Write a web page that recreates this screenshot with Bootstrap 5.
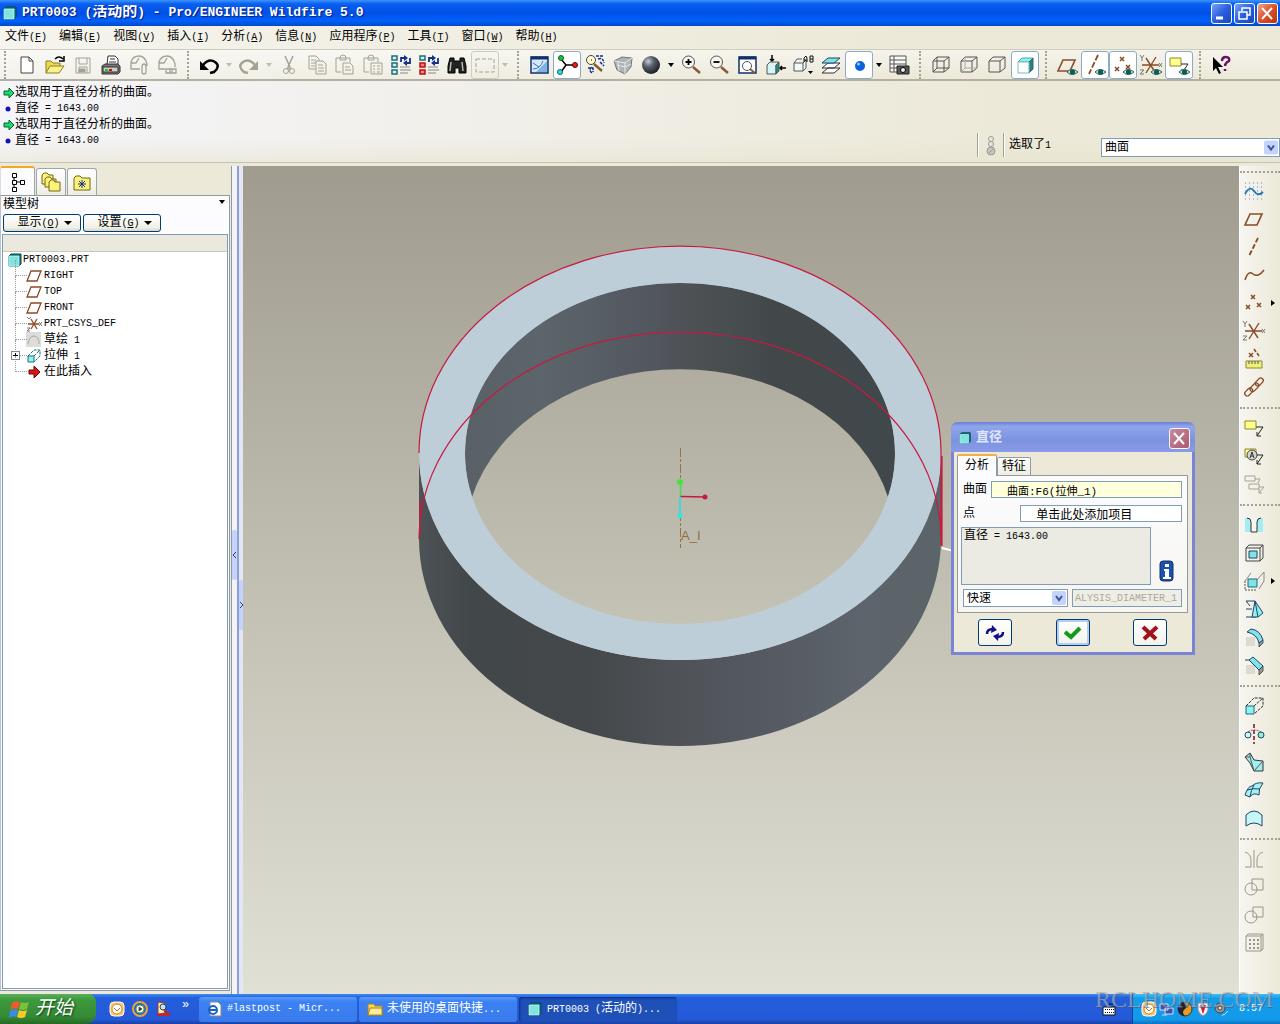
<!DOCTYPE html>
<html lang="zh-CN">
<head>
<meta charset="utf-8">
<meta name="viewport" content="width=device-width, initial-scale=1">
<title>PRT0003 (活动的) - Pro/ENGINEER Wildfire 5.0</title>
<link href="https://cdn.jsdelivr.net/npm/bootstrap@5.3.0/dist/css/bootstrap.min.css" rel="stylesheet">
<style>
body{font-family:"Liberation Mono","Noto Sans CJK SC",monospace;font-size:12px;line-height:16px;color:#000;background:#ece9d8;overflow:hidden}
button,input,select,textarea{font-family:inherit;font-size:12px;line-height:16px;color:#000}
button{border:0;background:none;padding:0}
svg{display:block;flex:none}
.en{font-size:10px}
.ic{width:24px;height:24px;fill:none;stroke:#555;stroke-width:1}
.ic-s{width:16px;height:16px;fill:none;stroke:#555}
/* title bar */
.titlebar{height:26px;background:linear-gradient(#3d95ff,#0a5ff0 15%,#0050e6 50%,#0162fc 80%,#0148c8);color:#fff;font-weight:700;font-size:15px;text-shadow:1px 1px 1px #0a1883;padding:0 2px}
.titlebar .en{font-size:13px}
.winbtn{width:21px;height:21px;border:1px solid #fff;border-radius:3px;background:linear-gradient(135deg,#7aa2f5,#2a5fe0 50%,#1b45bd)}
.winbtn.shut{background:linear-gradient(135deg,#f0a58c,#dc5028 50%,#b8360e)}
.winbtn svg{width:19px;height:19px;fill:none;stroke:#fff;stroke-width:2}
.menubar{height:23px;background:linear-gradient(90deg,#f5f4ee,#ece9d8 70%);padding-left:5px;gap:12px}
.menubar a{color:#000;text-decoration:none;white-space:nowrap}
/* tool bars */
.toolstrip{height:32px;border-top:1px solid #cfccbd;border-bottom:2px solid #b3b0a2;background:linear-gradient(#ffffff80,#ffffff00),linear-gradient(90deg,#f3f2ec,#ece9d8 70%)}
.tb{width:28px;height:28px;display:flex;align-items:center;justify-content:center;flex:none;border:1px solid transparent;border-radius:3px}
.tb.on{background:#fff;border-color:#8eabc6}
.tb.idle{border-color:#cfccbd}
.caret{width:12px;display:flex;justify-content:center;align-items:center;flex:none}
.caret::before{content:"";border:3px solid transparent;border-top:4px solid #000;border-bottom:0}
.caret.dim::before{border-top-color:#c2bfb0}
.grip{width:14px;height:28px;flex:none;display:flex;justify-content:center}
.grip::before{content:"";border-left:2px dotted #a5a294}
.grip.lead-in{width:13px;padding-right:3px}
.msgs{height:82px;background:linear-gradient(#ffffff00 70%,#e6e2cd80),linear-gradient(90deg,#f5f5f9,#ece9d8 80%);border-bottom:1px solid #c5c2b3}
.msgs ul{padding:4px 0 0 3px}
.msgs li{height:16px;display:flex;align-items:center;white-space:pre}
.status{margin-bottom:5px}
.vline{border-left:1px solid #a5a294;height:24px;width:2px;border-right:1px solid #fff}
.pick{position:relative}
.pick select{appearance:none;width:100%;height:100%;border:1px solid #7f9db9;border-radius:0;background:#fff;padding:2px 3px 0;line-height:14px;display:block}
.pick svg{position:absolute;right:2px;top:2px;pointer-events:none}
/* left panel */
.sidepane{width:230px;flex:none}
.pane-tabs{gap:1px}
.pane-tabs button{width:30px;height:27px;border:1px solid #9aa6b2;border-bottom:0;border-radius:3px 3px 0 0;background:linear-gradient(#fff,#efede2);display:flex;align-items:center;justify-content:center;margin-top:2px}
.pane-tabs button.on{width:35px;height:29px;margin:0;background:#fcfcfe;border-left-color:#ddd;border-top:2px solid #f5a623}
.pane-body{border:1px solid #919b9c;border-left-color:#b9c4cf;background:#fcfcfe;padding:0 1px 1px 1px;margin-bottom:3px}
.xpbtn{border:1px solid #003c74;border-radius:3px;height:18px;width:78px;background:linear-gradient(#fff,#f0efe6 80%,#d8d3c4);white-space:nowrap;display:flex;align-items:center;justify-content:center}
.xpbtn .caret{width:14px;margin-left:1px}
.xpbtn .caret::before{border-width:4px 4px 0 4px}
.treebox{border:1px solid #7f9db9;background:#fff;margin-top:2px}
.treehead{height:17px;background:#ebe9dd;border-bottom:1px solid #cbc7b8}
.tree{padding:0 0 0 4px}
.tree li,.treeroot{height:16px;display:flex;align-items:center;white-space:pre}
.tree li{padding-left:12px;position:relative;gap:2px;margin-left:7px}
.tree li::before{content:"";position:absolute;left:1px;top:-8px;height:16px;width:12px;border-left:1px dotted #999;border-bottom:1px dotted #999}
.plus{position:absolute;left:-3px;top:3px;width:9px;height:9px;background:#fff;border:1px solid #7f8a96}
.plus::before{content:"";position:absolute;left:1px;top:3px;width:5px;border-top:1px solid #000}
.plus::after{content:"";position:absolute;left:3px;top:1px;height:5px;border-left:1px solid #000}
.split{flex:none;display:flex;flex-direction:column;justify-content:center}
.split-a{width:7px;margin-left:1px;border-left:1px solid #8d9aa8;padding-bottom:50px;background:#f3f3f7;border-right:1px solid #8c9fd6}
.split-b{width:5px;padding-top:50px;background:#e4e6f2;border-left:1px solid #8c9fd6}
.split button{height:50px;width:5px;background:#c3d3fd;border-radius:2px;display:flex;align-items:center;justify-content:center}
/* model view */
.view{background:linear-gradient(#9f9c8f,#c3c1b4 53%,#e1e0d5);position:relative;min-width:0;overflow:hidden}
.view>svg{position:absolute;inset:0;width:100%;height:100%}
.rightbar{width:41px;flex:none;background:linear-gradient(90deg,#f6f5f0,#ece9d8);border-left:1px solid #fff}
.vgrip{height:13px;display:flex;align-items:center;flex:none}
.vgrip::before{content:"";width:100%;border-top:2px dotted #a5a294}
.vgrip.lead-in{height:11px}
.fly{display:flex;align-items:center;gap:3px}
.fly::after{content:"";border:3px solid transparent;border-left:4px solid #000;border-right:0}
/* dialog */
.dlg{position:absolute;right:44px;top:256px;width:244px;border:3px solid #7a83d6;border-top:0;border-radius:7px 7px 0 0;background:#ece9d8}
.dlg-title{height:30px;margin:0 -3px;padding:2px 5px 0 7px;border-radius:7px 7px 0 0;background:linear-gradient(#6b7fd6,#8fa6ec 15%,#7b92e0 60%,#8a9be8);color:#dfe5fb;font-weight:700;font-size:13px}
.dlg-title .winbtn{background:linear-gradient(135deg,#c98a9c,#b0566a);opacity:.95}
.dlg-main{padding:2px 4px 5px 3px}
.dlg-tabs button{border:1px solid #919b9c;border-bottom:0;height:18px;width:34px;background:linear-gradient(#fff,#efede2);border-radius:2px 2px 0 0}
.dlg-tabs button.on{height:22px;width:40px;background:#fcfcfe;border-top:2px solid #f5b041;margin-bottom:-1px;position:relative}
.dlg-body{border:1px solid #919b9c;background:linear-gradient(#fcfcfe,#f6f5ef);padding:5px 5px 5px 3px}
.fld{height:17px;border:1px solid #7f9db9;border-radius:0;padding:0 0 0 15px;line-height:15px;min-width:0}
.fld.code{font-size:10px}
.fld.lemon{background:#ffffdc;font-size:11px}
.out{height:58px;border:1px solid #7f9db9;background:#ebebe4;padding:0 2px;display:block;overflow:hidden;white-space:pre}
.okbtn{width:34px;height:27px;border:1px solid #003c74;border-radius:3px;background:linear-gradient(#fff,#f3f2ea);display:flex;align-items:center;justify-content:center}
.okbtn.def{box-shadow:inset 0 0 0 2px #b5cdf5}
/* task bar */
.taskbar{height:30px;background:linear-gradient(#3f8cf3,#245edb 12%,#2459d8 85%,#1941a5);color:#fff;position:relative}
.startbtn{width:96px;height:30px;color:#fff;font-style:italic;font-size:19px;font-weight:400;border-radius:0 8px 10px 0;background:linear-gradient(#5cae5c,#3c9a3c 20%,#358a35 75%,#236b23);text-shadow:1px 1px 2px #123d12;padding-left:9px}
.task{width:158px;height:25px;border-radius:3px;color:#fff;background:linear-gradient(#5b9bfb,#3c81f3 20%,#3a7bec);padding:0 8px;white-space:pre;overflow:hidden}
.task.on{background:#1e50b7;box-shadow:inset 1px 1px 2px #0d2f80}
.tray{width:148px;height:30px;background:linear-gradient(#3cc0f8,#139de9 15%,#129aea 85%,#0d6fc0);border-left:1px solid #0a3f9c;padding-left:8px}
.tray .ic-s{margin-right:2px}
.stamp{position:absolute;right:7px;top:-8px;font:24px/26px "Liberation Serif",serif;color:#a3afc0;opacity:.65;text-shadow:1px 1px 0 #4a5a78;pointer-events:none}
</style>
<script src="https://cdn.jsdelivr.net/npm/bootstrap@5.3.0/dist/js/bootstrap.bundle.min.js"></script>
</head>
<body>
<svg width="0" height="0" class="position-absolute">
<defs>
<symbol id="part" viewBox="0 0 16 16"><path d="M2 4l2-2h10v10l-2 2H2z" fill="#127a80" stroke="#0b4348"/><path d="M2 4h10v10H2z" fill="#7fe3e0" stroke="#dff" stroke-width=".6"/></symbol>
<symbol id="plane" viewBox="0 0 24 24"><path d="M8 7h12l-5 11H3z" stroke="#8a4b27" stroke-width="1.6" fill="none"/></symbol>
<symbol id="plane-s" viewBox="0 0 16 16"><path d="M5 3h10l-4 10H1z" stroke="#8a4b27" stroke-width="1.300" fill="none"/></symbol>
<symbol id="csys-s" viewBox="0 0 16 16"><path d="M2 8h11M5 3l6 10M11 3L5 13" stroke="#8a4b27" stroke-width="1.300"/><path d="M1 1l2 2 2-2M13 6l3 4M16 6l-3 4M1 12h3l-3 3h3" stroke="#777"/></symbol>
<symbol id="csys" viewBox="0 0 24 24"><path d="M3 12h17M7 5l9 14M17 4L7 20" stroke="#8a4b27" stroke-width="1.4"/><path d="M1 2l2 3 2-3M3 5v3M20 10l3 4M23 10l-3 4M1 17h4l-4 4h4" stroke="#777" stroke-width="1"/></symbol>
<symbol id="xs" viewBox="0 0 24 24"><path d="M9 4l4 4M13 4l-4 4M4 14l4 4M8 14l-4 4M15 12l4 4M19 12l-4 4" stroke="#8a4b27" stroke-width="1.5"/></symbol>
<symbol id="eye" viewBox="0 0 24 24"><path d="M12 19q5-5 11 0q-6 5-11 0z" fill="#cfe8e4" stroke="#2f5f5a"/><circle cx="17.500" cy="19" r="2.600" fill="#0d5b52" stroke="none"/></symbol>
<symbol id="wire" viewBox="0 0 24 24"><path d="M4 8h11v11H4zM4 8l4-4h12v11l-5 4M15 8l5-4"/></symbol>
<symbol id="boxes" viewBox="0 0 24 24"><path d="M11 14h10M11 17h11M11 20h8" stroke="#888"/><path d="M12 9V5h4M21 5v5h-4" stroke="#16308c" stroke-width="1.800"/><path d="M15 2l4 3-4 3zM18 7l-4 3 4 3z" fill="#16308c" stroke="none"/></symbol>
<symbol id="clip" viewBox="0 0 24 24"><path d="M8 19H3V5h14v4M7 5q0-3 3-3t3 3v2H7z"/></symbol>
<symbol id="note" viewBox="0 0 24 24"><path d="M3 5h11v8H3z" fill="#ffff8c" stroke="#8b8b2a"/><path d="M14 11h7l-6 9M15 16v4h4" stroke="#222"/></symbol>
<symbol id="chev" viewBox="0 0 14 14"><rect width="14" height="14" rx="2" fill="#c3d3fd" stroke="none"/><path d="M4 5l3 4 3-4" fill="none" stroke="#3d5485" stroke-width="2"/></symbol>
<symbol id="mag" viewBox="0 0 24 24"><path d="M14 14l7 6" stroke="#8a5a35" stroke-width="2.500"/><circle cx="9.500" cy="9" r="6" fill="#f7f6ef" stroke="#555"/></symbol>
</defs>
</svg>
<div class="d-flex flex-column vh-100">
<header class="titlebar d-flex align-items-center">
<svg class="ic-s me-1"><use href="#part"/></svg>
<span class="flex-grow-1 text-nowrap overflow-hidden"><span class="en">PRT0003 (</span>活动的<span class="en">) - Pro/ENGINEER Wildfire 5.0</span></span>
<div class="d-flex" style="gap:2px">
<button class="winbtn" aria-label="最小化"><svg viewBox="0 0 19 19"><path d="M4 14h7" stroke-width="3"/></svg></button>
<button class="winbtn" aria-label="还原"><svg viewBox="0 0 19 19"><path d="M7 7V4h8v7h-3M4 8h8v7H4z" stroke-width="1.500"/></svg></button>
<button class="winbtn shut" aria-label="关闭"><svg viewBox="0 0 19 19"><path d="M4 4l10 11M14 4L4 15"/></svg></button>
</div>
</header>
<nav class="menubar d-flex align-items-center">
<a href="#">文件<span class="en">(<u>F</u>)</span></a><a href="#">编辑<span class="en">(<u>E</u>)</span></a><a href="#">视图<span class="en">(<u>V</u>)</span></a><a href="#">插入<span class="en">(<u>I</u>)</span></a><a href="#">分析<span class="en">(<u>A</u>)</span></a><a href="#">信息<span class="en">(<u>N</u>)</span></a><a href="#">应用程序<span class="en">(<u>P</u>)</span></a><a href="#">工具<span class="en">(<u>T</u>)</span></a><a href="#">窗口<span class="en">(<u>W</u>)</span></a><a href="#">帮助<span class="en">(<u>H</u>)</span></a>
</nav>
<div class="toolstrip d-flex align-items-center" role="toolbar">
<span class="grip lead-in"></span>
<button class="tb" aria-label="新建"><svg class="ic"><path d="M6 4h8l4 4v12H6zM14 4v4h4" fill="#fff" stroke="#444"/></svg></button>
<button class="tb" aria-label="打开"><svg class="ic"><path d="M3 20V8h5l2 2h7v3" fill="#e8d95a" stroke="#8f7f1c"/><path d="M3 20l4-7h14l-5 7z" fill="#fbf08a" stroke="#8f7f1c"/><path d="M12 6q4-4 8 0M21 3v5h-5" stroke="#000" stroke-width="1.500"/></svg></button>
<button class="tb" aria-label="保存"><svg class="ic"><g stroke="#a5a294"><path d="M5 5h14v15H5zM8 5v6h8V5M8 20v-6h8v6"/><path d="M8 16h6v3H8z" fill="#a5a294"/></g></svg></button>
<button class="tb" aria-label="打印"><svg class="ic"><path d="M8 12l1-9h7l3 3v6M11 6h5M10 9h7" fill="#fff" stroke="#333"/><path d="M3 13l3-2h13l2 2v6l-2 2H3z" fill="#777" stroke="#333"/><path d="M4 14h15v5H4z" fill="#ccc" stroke="#333"/><path d="M6 17h3" stroke="#1c1" stroke-width="2"/><path d="M10 17h3" stroke="#c11" stroke-width="2"/></svg></button>
<button class="tb" aria-label="发送"><svg class="ic"><g stroke="#a5a294"><path d="M13 16H4V9q2-6 8-6t8 8v2M4 10h5l3-5M15 14q0-3 2-3t2 3v5q0 2-2 2t-2-2z" stroke-width="1.300"/></g></svg></button>
<button class="tb" aria-label="发送链接"><svg class="ic"><g stroke="#a5a294"><path d="M10 16H4V9q2-6 8-6t8 8v3M4 10h5l3-5M11 16h6v4h-6zM15 16h6v4h-6z" stroke-width="1.300"/></g></svg></button>
<span class="grip"></span>
<button class="tb" aria-label="撤消"><svg class="ic"><path d="M6 12q6-7 12-3t-1 10l-4 1" stroke="#000" stroke-width="2.500"/><path d="M3 8v9h9z" fill="#000" stroke="none"/></svg></button><span class="caret dim"></span>
<button class="tb" aria-label="重做"><svg class="ic"><path d="M18 12q-6-7-12-3t1 10l4 1" stroke="#a5a294" stroke-width="2.500"/><path d="M21 8v9h-9z" fill="#a5a294" stroke="none"/></svg></button><span class="caret dim"></span>
<button class="tb" aria-label="剪切"><svg class="ic"><g stroke="#a5a294"><path d="M8 3l5 11M16 3l-5 11M11 14v3M13 14v3" stroke-width="1.500"/><circle cx="9" cy="18" r="2.500"/><circle cx="15" cy="18" r="2.500"/></g></svg></button>
<button class="tb" aria-label="复制"><svg class="ic"><g stroke="#a5a294"><path d="M11 16H4V3h7l3 3v2M6 7h5M6 10h5M6 13h4M11 8h7l3 3v10H11zM13 12h5M13 15h6M13 18h6"/></g></svg></button>
<button class="tb" aria-label="粘贴"><svg class="ic"><g stroke="#a5a294"><use href="#clip"/><path d="M10 10h7l3 3v8H10zM12 14h5M12 17h6"/></g></svg></button>
<button class="tb" aria-label="选择性粘贴"><svg class="ic"><g stroke="#a5a294"><use href="#clip"/><path d="M10 10h11v11H10zM12 13h2M16 13h3M12 16h2M16 16h3M12 19h2M16 19h3"/></g></svg></button>
<button class="tb" aria-label="再生"><svg class="ic"><path d="M3 3h5v4H3zM3 10h5v4H3zM3 17h5v4H3z" fill="#d5f2f2" stroke="#1c6f78" stroke-width="1.500"/><use href="#boxes"/></svg></button>
<button class="tb" aria-label="再生管理器"><svg class="ic"><path d="M3 3h5v4H3z" fill="#d5f2f2" stroke="#1c6f78" stroke-width="1.500"/><path d="M3 10h5v4H3zM3 17h5v4H3z" fill="#ff8080" stroke="#b11" stroke-width="1.500"/><use href="#boxes"/></svg></button>
<button class="tb" aria-label="查找"><svg class="ic"><path d="M5 5h4v3h6V5h4l2 8v7h-7v-5h-4v5H3v-7z" fill="#222" stroke="#000"/><path d="M6 9l-1 9M17 9l1 9" stroke="#bbb" stroke-width="1.500"/></svg></button>
<button class="tb idle" aria-label="选择框"><svg class="ic"><path d="M3 6h18v13H3z" stroke="#a5a294" stroke-dasharray="4 2"/></svg></button><span class="caret dim"></span>
<span class="grip"></span>
<button class="tb" aria-label="重画"><svg class="ic"><path d="M4 4h17v16H4z" fill="#d6e9fb" stroke="#12306b" stroke-width="1.500"/><path d="M4 5h17" stroke="#12306b" stroke-width="3"/><path d="M20 8v11H9z" fill="#7fb2e6" stroke="none"/><path d="M6 16q7 0 10-8M6 10l6 4" stroke="#3c6fb0"/></svg></button>
<button class="tb on" aria-label="旋转中心"><svg class="ic"><path d="M6 6l5 6h8M11 12l-5 7" stroke="#000" stroke-width="1.500"/><circle cx="6" cy="5" r="2.500" fill="#2b3" stroke="#063"/><circle cx="20" cy="12" r="2.500" fill="#d22" stroke="#600"/><circle cx="5" cy="19" r="2.500" fill="#3dd" stroke="#066"/></svg></button>
<button class="tb" aria-label="定向模式"><svg class="ic"><circle cx="8" cy="7" r="4.500" fill="#fffbd0" stroke="#444"/><path d="M11 11l8 7" stroke="#8a5a35" stroke-width="2.500"/><path d="M8 7h.5" stroke="#000" stroke-width="2"/><path d="M13 3h8M15 6q5-2 6 4M9 20q-4-3 0-6M5 15h5v4M17 9l4 4" stroke="#16308c" stroke-width="1.500" stroke-dasharray="3 1"/></svg></button>
<button class="tb" aria-label="外观库"><svg class="ic"><path d="M3 8l8-4 10 1-1 9-6 7-8-4z" fill="#aeb4b6" stroke="#777"/><path d="M3 8l11 2 7-5M14 10v11M6 12l8 2 6-3M7 9l1 9" stroke="#e8eaea"/></svg></button>
<button class="tb" aria-label="着色"><svg class="ic"><defs><radialGradient id="ball" cx=".35" cy=".3" r=".75"><stop stop-color="#c5ccd4"/><stop offset=".4" stop-color="#59616b"/><stop offset="1" stop-color="#181b20"/></radialGradient></defs><circle cx="12" cy="12" r="9" fill="url(#ball)" stroke="none"/></svg></button><span class="caret"></span>
<button class="tb" aria-label="放大"><svg class="ic"><use href="#mag"/><path d="M6.500 9h6M9.500 6v6" stroke="#000" stroke-width="1.800"/></svg></button>
<button class="tb" aria-label="缩小"><svg class="ic"><use href="#mag"/><path d="M6.500 9h6" stroke="#000" stroke-width="1.800"/></svg></button>
<button class="tb" aria-label="重新调整"><svg class="ic"><path d="M4 4h17v16H4z" fill="#fff" stroke="#12306b" stroke-width="1.500"/><path d="M4 5h17" stroke="#12306b" stroke-width="3"/><circle cx="12" cy="13" r="4.500" stroke="#555"/><path d="M15 16l5 4" stroke="#8a5a35" stroke-width="2"/></svg></button>
<button class="tb" aria-label="重定向"><svg class="ic"><path d="M4 12l3-3h9l-3 3v9H4z" fill="#d5f5f5" stroke="#555"/><path d="M13 12l3-3v9l-3 3z" fill="#1a8f8f"/><path d="M9 2v6M7 6l2 2 2-2M23 15h-6M19 13l-2 2 2 2" stroke="#000" stroke-width="1.500"/></svg></button>
<button class="tb" aria-label="保存的视图"><svg class="ic"><path d="M3 10l3-4h5M3 10h9v8H3zM12 10l3-3v8l-3 3" fill="#f0fafa"/><path d="M13 9V5l2-2 1 2v4M13 7h3M19 3v6h3V3zM19 6h3" stroke="#111"/><path d="M17 18h5l-2.500 3z" fill="#000" stroke="none"/></svg></button>
<button class="tb" aria-label="层"><svg class="ic"><path d="M3 20l6-5h12l-6 5zM3 15l6-5h12l-6 5z" fill="#fff" stroke="#333"/><path d="M3 10l6-5h12l-6 5z" fill="#7fe3e8" stroke="#246"/></svg></button>
<button class="tb on" aria-label="渲染"><svg class="ic"><circle cx="13" cy="13" r="5" fill="#0b62dc" stroke="none"/><circle cx="11.500" cy="11" r="1.500" fill="#8fd0ff" stroke="none"/></svg></button><span class="caret"></span>
<button class="tb" aria-label="视图管理器"><svg class="ic"><path d="M3 3h16v16H3zM3 7h16M3 11h16M3 15h16M7 3v16" fill="#f8f8f4"/><path d="M10 13h12v8H10z" fill="#555" stroke="#222"/><circle cx="16" cy="17" r="2.500" fill="#eee" stroke="#000"/></svg></button>
<span class="grip"></span>
<button class="tb" aria-label="线框"><svg class="ic"><use href="#wire"/><path d="M8 4v11H20M4 19l4-4"/></svg></button>
<button class="tb" aria-label="隐藏线"><svg class="ic"><use href="#wire"/><path d="M8 4v11H20M4 19l4-4" stroke="#aaa"/></svg></button>
<button class="tb" aria-label="无隐藏线"><svg class="ic"><use href="#wire"/></svg></button>
<button class="tb on" aria-label="着色显示"><svg class="ic"><path d="M5 9l4-4h11l-4 4z" fill="#8df3f5" stroke="#4aa"/><path d="M16 9l4-4v11l-4 4z" fill="#2a7f86" stroke="#366"/><path d="M5 9h11v11H5z" fill="#fff" stroke="#7bb"/></svg></button>
<span class="grip"></span>
<button class="tb" aria-label="平面显示"><svg class="ic"><use href="#plane"/><use href="#eye"/></svg></button>
<button class="tb on" aria-label="轴显示"><svg class="ic"><path d="M15 2L6 21" stroke="#8a4b27" stroke-width="1.800" stroke-dasharray="6 2"/><use href="#eye"/></svg></button>
<button class="tb on" aria-label="点显示"><svg class="ic"><use href="#xs"/><use href="#eye"/></svg></button>
<button class="tb" aria-label="坐标系显示"><svg class="ic"><use href="#csys"/><use href="#eye"/></svg></button>
<button class="tb on" aria-label="注释显示"><svg class="ic"><use href="#note"/><use href="#eye"/></svg></button>
<span class="grip"></span>
<button class="tb" aria-label="帮助"><svg class="ic" viewBox="0 0 24 24"><path d="M4 4v14l3-3 3 6 2-1-3-6h5z" fill="#000" stroke="none"/><path d="M13 8q0-4 4-4t3 4q-4 2-4 5M16 16v2" stroke="#6a1068" stroke-width="2.500"/></svg></button>
</div>
<section class="msgs d-flex justify-content-between align-items-end flex-none">
<ul class="list-unstyled m-0 align-self-start">
<li><svg width="12" height="12"><path d="M1 4h5V1l5 5-5 5V8H1z" fill="#1fd66c" stroke="#063" /></svg>选取用于直径分析的曲面。</li>
<li><svg width="12" height="12"><circle cx="5" cy="6" r="2.500" fill="#1414b4"/></svg>直径<span class="en"> = 1643.00</span></li>
<li><svg width="12" height="12"><path d="M1 4h5V1l5 5-5 5V8H1z" fill="#1fd66c" stroke="#063" /></svg>选取用于直径分析的曲面。</li>
<li><svg width="12" height="12"><circle cx="5" cy="6" r="2.500" fill="#1414b4"/></svg>直径<span class="en"> = 1643.00</span></li>
</ul>
<div class="d-flex align-items-center status">
<span class="vline"></span>
<svg width="24" height="22" fill="none" stroke="#999"><circle cx="12" cy="5" r="2.500"/><circle cx="12" cy="10" r="2.500"/><circle cx="12" cy="17" r="4" fill="#c8c6ba"/><path d="M10 19l4-4"/></svg>
<span class="vline"></span>
<label for="filter" class="ms-1" style="width:92px">选取了<span class="en">1</span></label>
<div class="pick mt-1" style="width:179px;height:19px"><select id="filter"><option>曲面</option></select><svg width="14" height="15"><use href="#chev"/></svg></div>
</div>
</section>
<main class="d-flex flex-grow-1" style="min-height:0;padding-top:3px">
<aside class="sidepane d-flex flex-column">
<div class="pane-tabs d-flex">
<button class="on" aria-label="模型树"><svg width="18" height="20" fill="#fff" stroke="#000"><path d="M5 5v10M5 10h8" /><path d="M3.500 1.500h4v4h-4zM3.500 8.500h4v4h-4zM11.500 8.500h4v4h-4zM3.500 15.500h4v4h-4z"/></svg></button>
<button aria-label="文件夹浏览器"><svg width="20" height="20" fill="#fbf27a" stroke="#6f661a"><path d="M1 12V3l2-2h3l2 2h4v9z"/><path d="M4 15V7l2-2h3l2 2h4v8z"/><path d="M8 19v-9l2-2h3l1 2h5v9z"/></svg></button>
<button aria-label="收藏夹"><svg width="20" height="20" fill="#fbf27a" stroke="#6f661a"><path d="M2 18V6l2-2h4l2 2h8v12z"/><path d="M10 8v8M6 12h8M7 9l6 6M13 9l-6 6" stroke="#16308c"/></svg></button>
</div>
<div class="pane-body flex-grow-1 d-flex flex-column">
<div class="d-flex justify-content-between align-items-start" style="height:18px"><span style="line-height:18px;padding-left:1px">模型树</span><span class="caret pt-1"></span></div>
<div class="d-flex" style="gap:2px;padding-left:1px"><button class="xpbtn"><span class="ms-2">显示<span class="en">(<u>O</u>)</span></span><span class="caret"></span></button><button class="xpbtn"><span class="ms-2">设置<span class="en">(<u>G</u>)</span></span><span class="caret"></span></button></div>
<div class="treebox flex-grow-1">
<div class="treehead"></div>
<div class="tree">
<div class="treeroot"><svg class="ic-s"><use href="#part"/></svg><span class="en">PRT0003.PRT</span></div>
<ul class="list-unstyled m-0">
<li><svg class="ic-s"><use href="#plane-s"/></svg><span class="en">RIGHT</span></li>
<li><svg class="ic-s"><use href="#plane-s"/></svg><span class="en">TOP</span></li>
<li><svg class="ic-s"><use href="#plane-s"/></svg><span class="en">FRONT</span></li>
<li><svg class="ic-s"><use href="#csys-s"/></svg><span class="en">PRT_CSYS_DEF</span></li>
<li><svg class="ic-s"><path d="M0 0h15v15H0z" fill="#dcdcd8" stroke="none"/><path d="M2 12q1-8 6-8t5 8" stroke="#aaa"/></svg><span>草绘<span class="en"> 1</span></span></li>
<li><span class="plus"></span><svg class="ic-s"><path d="M2 8h6v6H2z" fill="#8df3f5" stroke="#1c6f78"/><path d="M2 8l6-6h6v6l-6 6M8 8l6-6" stroke="#1c6f78" stroke-dasharray="3 1"/></svg><span>拉伸<span class="en"> 1</span></span></li>
<li><svg class="ic-s"><path d="M3 6h5V2l6 6-6 6v-4H3z" fill="#d01818" stroke="#700"/></svg>在此插入</li>
</ul>
</div>
</div>
</div>
</aside>
<div class="split split-a"><button aria-label="折叠"><svg width="5" height="8"><path d="M4 1L1 4l3 3" fill="none" stroke="#2b3f8f"/></svg></button></div>
<div class="split split-b"><button aria-label="展开"><svg width="5" height="8"><path d="M1 1l3 3-3 3" fill="none" stroke="#2b3f8f"/></svg></button></div>
<section class="view flex-grow-1">
<svg viewBox="243 166 996 828">
<defs>
<linearGradient id="inwall"><stop stop-color="#596167"/><stop offset=".18" stop-color="#5c656b"/><stop offset=".42" stop-color="#53575f"/><stop offset=".55" stop-color="#4c5053"/><stop offset=".72" stop-color="#42484a"/><stop offset="1" stop-color="#41484b"/></linearGradient>
<linearGradient id="outwall"><stop stop-color="#4c5255"/><stop offset=".1" stop-color="#42474a"/><stop offset=".33" stop-color="#44484b"/><stop offset=".5" stop-color="#4f5358"/><stop offset=".66" stop-color="#555961"/><stop offset=".85" stop-color="#5d646b"/><stop offset="1" stop-color="#5b6469"/></linearGradient>
</defs>
<path d="M419 453V539A261 207 0 0 0 941 539V453A261 207 0 0 1 419 453z" fill="url(#outwall)"/>
<path d="M472 497A215 171 0 1 1 888 497A215 171 0 0 0 472 497z" fill="url(#inwall)"/>
<path fill-rule="evenodd" d="M419 453A261 207 0 1 1 941 453A261 207 0 1 1 419 453zM465 453.500A215 170.500 0 1 0 895 453.500A215 170.500 0 1 0 465 453.500z" fill="#bdced9"/>
<path d="M419 453A261 207 0 0 1 941 453V546M419 539A261 207 0 0 1 941 539M420 500V532M942 456V546" fill="none" stroke="#c8193f" stroke-width="1.200"/>
<path d="M680.500 448v100" stroke="#96744a" stroke-dasharray="9 2 3 2"/>
<path d="M680.500 482v14" stroke="#3fe03f" stroke-width="1.500"/><path d="M680 497v18" stroke="#3fd8e0" stroke-width="2"/><path d="M681 496.500l24 .500" stroke="#c8193f" stroke-width="1.500"/>
<circle cx="680" cy="482" r="3" fill="#3ee63e"/><circle cx="680" cy="516" r="2.500" fill="#2ee6e6"/><circle cx="705" cy="497" r="2.500" fill="#c8193f"/>
<text x="681" y="540" font-size="13" fill="#8f6f42" font-family="Liberation Sans, sans-serif">A_I</text>
<path d="M942 548l12 3" stroke="#fff" stroke-width="2"/>
</svg>
<div class="dlg" role="dialog" aria-label="直径">
<div class="dlg-title d-flex align-items-center"><svg width="14" height="14" class="me-1"><use href="#part"/></svg><span class="flex-grow-1">直径</span><button class="winbtn" aria-label="关闭"><svg viewBox="0 0 19 19"><path d="M4 4l10 11M14 4L4 15"/></svg></button></div>
<div class="dlg-main">
<div class="dlg-tabs d-flex align-items-end"><button class="on">分析</button><button>特征</button></div>
<div class="dlg-body">
<div class="d-flex align-items-center" style="margin-bottom:7px"><label for="surf" style="width:30px;padding-left:2px">曲面</label><input id="surf" class="fld lemon flex-grow-1" value="曲面:F6(拉伸_1)"></div>
<div class="d-flex align-items-center" style="margin-bottom:5px"><label for="pt" style="width:62px;padding-left:2px">点</label><input id="pt" class="fld flex-grow-1" value="单击此处添加项目"></div>
<div class="d-flex align-items-end mb-1"><output class="out" style="width:190px" aria-label="结果">直径<span class="en"> = 1643.00</span></output>
<svg width="16" height="26" class="ms-2"><rect x="1" y="2" width="13" height="20" rx="3" fill="#1c4fae" stroke="#12306b"/><path d="M6 5h4v3H6zM5 10h5v8h2v2H4v-2h2v-6H5z" fill="#fff"/></svg></div>
<div class="d-flex" style="gap:4px;padding-left:2px"><div class="pick" style="width:105px;height:18px"><select aria-label="类型"><option>快速</option></select><svg width="14" height="14"><use href="#chev"/></svg></div><input class="fld code flex-grow-1" style="height:18px;padding:0 2px;color:#aca899;background:#efeee6;width:0" aria-label="名称" value="ALYSIS_DIAMETER_1" disabled></div>
</div>
<div class="d-flex justify-content-between" style="padding:6px 21px 1px">
<button class="okbtn" aria-label="重复"><svg width="22" height="20" fill="none" stroke="#10108a" stroke-width="2.500"><path d="M3 11q0-5 6-5M19 9q0 5-6 5"/><path d="M8 2l5 5-6 3zM14 18l-5-5 6-3z" fill="#10108a" stroke="none"/></svg></button>
<button class="okbtn def" aria-label="确定"><svg width="20" height="18" fill="none" stroke="#129a1c" stroke-width="4"><path d="M2 8l6 5 9-9"/></svg></button>
<button class="okbtn" aria-label="取消"><svg width="20" height="18" fill="none" stroke="#a3121a" stroke-width="4"><path d="M3 3l13 12M17 3L4 15"/></svg></button>
</div>
</div>
</div>
</section>
<aside class="rightbar d-flex flex-column overflow-hidden">
<span class="vgrip lead-in"></span>
<button class="tb" aria-label="草绘"><svg class="ic"><path d="M3 4h18M3 8h18M3 12h18M3 16h18M3 20h18" stroke="#4c8fd0" stroke-dasharray="1 3"/><path d="M3 15q5-9 9-3t9 1" stroke="#2272b8" stroke-width="1.800"/></svg></button>
<button class="tb" aria-label="平面"><svg class="ic"><use href="#plane"/></svg></button>
<button class="tb" aria-label="轴"><svg class="ic"><path d="M16 3L7 21" stroke="#8a4b27" stroke-width="1.800" stroke-dasharray="5 2"/></svg></button>
<button class="tb" aria-label="曲线"><svg class="ic"><path d="M3 17q3-10 8-6t11-4" stroke="#8a4b27" stroke-width="1.500"/></svg></button>
<div class="fly"><button class="tb" aria-label="点"><svg class="ic"><use href="#xs"/></svg></button></div>
<button class="tb" aria-label="坐标系"><svg class="ic"><use href="#csys"/></svg></button>
<button class="tb" aria-label="分析"><svg class="ic"><path d="M7 6l4 4M11 6l-4 4M12 2l2 3M15 6l2 3" stroke="#8a4b27" stroke-width="1.500"/><path d="M4 14h16v7H4z" fill="#eef07a" stroke="#8b8b2a"/><path d="M7 14v3M10 14v3M13 14v3M16 14v3" stroke="#555"/></svg></button>
<button class="tb" aria-label="参照"><svg class="ic"><g stroke="#8a4b27" stroke-width="1.300"><rect x="2" y="15" width="9" height="5" rx="2.500" transform="rotate(-45 6 17)"/><rect x="7" y="10" width="10" height="5" rx="2.500" transform="rotate(-45 12 12)"/><rect x="13" y="4" width="9" height="5" rx="2.500" transform="rotate(-45 18 7)"/></g></svg></button>
<span class="vgrip"></span>
<button class="tb" aria-label="注释"><svg class="ic"><use href="#note"/></svg></button>
<button class="tb" aria-label="注释特征"><svg class="ic"><use href="#note"/><circle cx="10" cy="11" r="5" fill="#d5d5cc" stroke="#444"/><path d="M8 14l2-6 2 6M9 12h2" stroke="#333"/></svg></button>
<button class="tb" aria-label="传播"><svg class="ic"><g stroke="#a5a294"><path d="M3 4h10v5H3zM7 12h10v5H7zM13 7h5l-2 4M17 15h5l-5 6M17 17v4h3"/></g></svg></button>
<span class="vgrip"></span>
<button class="tb" aria-label="孔"><svg class="ic"><path d="M3 5h18v14H3z" fill="#a5edf2" stroke="none"/><path d="M5 5q4 0 4 4v10h6V9q0-4 4-4" fill="#f6f5f0" stroke="#333"/></svg></button>
<button class="tb" aria-label="壳"><svg class="ic"><path d="M4 7l3-3h14v13l-3 3H4zM4 7h14v13M18 7l3-3" stroke="#444"/><path d="M7 10h8v7H7z" fill="#7fe3e8" stroke="#246"/></svg></button>
<div class="fly"><button class="tb" aria-label="筋"><svg class="ic"><path d="M3 12l6-8M14 12l8-9v9l-5 8" stroke="#888"/><path d="M6 10h9v8H6z" fill="#7fe3e8" stroke="#1c6f78"/><path d="M3 12v9h11" stroke="#555" stroke-dasharray="2 1"/></svg></button></div>
<button class="tb" aria-label="拔模"><svg class="ic"><path d="M4 4h9M4 12h6M4 20h10M4 4l4 5" stroke="#246"/><path d="M13 4l8 12-5 4h-6z" fill="#8df0f2" stroke="#246"/><path d="M13 4l3 16" stroke="#246"/></svg></button>
<button class="tb" aria-label="倒圆角"><svg class="ic"><path d="M4 12h9v9H4z" fill="#dddbd0" stroke="none"/><path d="M21 15v3l-4 4v-5z" fill="#999"/><path d="M5 7l4-3q9 1 12 11l-4 3Q15 9 5 7z" fill="#7fe3e8" stroke="#246"/></svg></button>
<button class="tb" aria-label="倒角"><svg class="ic"><path d="M4 12h9v9H4z" fill="#dddbd0" stroke="none"/><path d="M21 13v5l-4 4v-5z" fill="#999"/><path d="M7 7l4-3 10 9-4 4z" fill="#7fe3e8" stroke="#246"/><path d="M3 7h4" stroke="#246"/></svg></button>
<span class="vgrip"></span>
<button class="tb" aria-label="拉伸"><svg class="ic"><path d="M4 12h8v8H4z" fill="#8df3f5" stroke="#1c6f78"/><path d="M4 12l8-8h9v8l-9 8M12 12l9-8" stroke="#333" stroke-dasharray="3 1"/></svg></button>
<button class="tb" aria-label="旋转"><svg class="ic"><path d="M12 2v20" stroke="#811" stroke-width="1.500" stroke-dasharray="4 2"/><circle cx="6" cy="13" r="3" fill="#d5f5f5" stroke="#246"/><circle cx="19" cy="13" r="3" fill="#8df0d5" stroke="#246"/><path d="M6 10q6-4 13 0" stroke="#555" stroke-dasharray="2 1"/></svg></button>
<button class="tb" aria-label="扫描混合"><svg class="ic"><path d="M3 7l5-4 4 7 9 1v10h-9L8 13z" fill="#9feef2" stroke="#333"/><path d="M12 21l9-10M3 7h5l4 14M8 7V3" stroke="#555"/></svg></button>
<button class="tb" aria-label="边界混合"><svg class="ic"><path d="M3 17q3-9 7-9 4-4 11-3-5 6-4 12-6-3-9 2z" fill="#a5f2f5" stroke="#246"/><path d="M12 7q-3 5-4 12M5 12q6-2 13-1" stroke="#246"/></svg></button>
<button class="tb" aria-label="造型"><svg class="ic"><path d="M4 9q8-8 16 0v11q-8-6-16 0z" fill="#c5f7f8" stroke="#246"/></svg></button>
<span class="vgrip"></span>
<button class="tb" aria-label="镜像"><svg class="ic"><g stroke="#999688"><path d="M12 3v18M3 5q6 2 6 8v7H3M21 5q-6 2-6 8v7h6"/></g></svg></button>
<button class="tb" aria-label="合并"><svg class="ic"><g stroke="#999688"><path d="M10 4h11v11H10z"/><circle cx="9" cy="14" r="6"/></g></svg></button>
<button class="tb" aria-label="修剪"><svg class="ic"><g stroke="#999688"><path d="M11 4h10v10H11z"/><circle cx="9" cy="14" r="6"/></g></svg></button>
<button class="tb" aria-label="阵列"><svg class="ic"><g stroke="#999688"><path d="M4 5l2-2h15v15l-2 2H4zM4 5h15v15M19 5l2-2"/><path d="M7 9h10M7 13h10M7 17h10" stroke-width="2" stroke-dasharray="2 2"/></g></svg></button>
</aside>
</main>
<footer class="taskbar d-flex align-items-center">
<button class="startbtn d-flex align-items-center"><svg width="22" height="20" class="me-1"><path d="M3 4q4-3 8-1l-2 7q-4-2-8 1z" fill="#f0592a"/><path d="M12 3q4 2 8 0l-2 7q-4 2-8 0z" fill="#7cc03c"/><path d="M1 12q4-3 8-1l-2 7q-3-2-7 1z" fill="#3a8de8"/><path d="M10 11q4 2 8 0l-2 7q-4 2-8 0z" fill="#fbc928"/></svg>开始</button>
<div class="d-flex align-items-center" style="padding-left:13px;gap:7px;width:103px">
<svg class="ic-s"><rect x="1" y="1" width="14" height="14" rx="4" fill="#f9c46a" stroke="#fff"/><circle cx="8" cy="8" r="5" fill="#fff" stroke="#d08a20"/><path d="M5 7l3 3 3-3" stroke="#c60"/></svg>
<svg class="ic-s"><circle cx="8" cy="8" r="7" fill="#2d63c8" stroke="#e9a53c" stroke-width="2"/><circle cx="8" cy="8" r="4" fill="#fff" stroke="#5a2"/><path d="M7 6l3 2-3 2z" fill="#222"/></svg>
<svg class="ic-s"><path d="M3 1l6 1 1 10-7 1z" fill="#fff2b0" stroke="#a33"/><circle cx="8" cy="6" r="3" fill="#bfe3ff" stroke="#345"/><path d="M2 14h12L9 9" stroke="#c22" stroke-width="2"/></svg>
<span class="mb-2 ms-1">»</span>
</div>
<div class="d-flex" style="gap:2px">
<button class="task d-flex align-items-center"><svg class="ic-s me-1"><path d="M3 1h8l3 3v11H3z" fill="#fff" stroke="#888"/><circle cx="6" cy="9" r="4" stroke="#1b62c9" stroke-width="2"/><path d="M3 9h7" stroke="#1b62c9" stroke-width="2"/></svg><span class="en">#lastpost - Micr...</span></button>
<button class="task d-flex align-items-center"><svg class="ic-s me-1"><path d="M1 14V3h6l1 2h7v9z" fill="#f7d65c" stroke="#a8861a"/><path d="M1 14l2-7h12v7z" fill="#fdeb9a" stroke="#a8861a"/></svg><span>未使用的桌面快捷<span class="en">...</span></span></button>
<button class="task on d-flex align-items-center"><svg class="ic-s me-1"><use href="#part"/></svg><span><span class="en">PRT0003 (</span>活动的<span class="en">)...</span></span></button>
</div>
<svg class="ms-auto me-3" width="14" height="14"><path d="M1 5h12v8H1z" fill="#fff" stroke="#111"/><path d="M3 7.500h9M3 10.500h9" stroke="#111" stroke-dasharray="1 1"/><path d="M7 5V2h4" stroke="#111" fill="none"/></svg>
<div class="tray d-flex align-items-center">
<svg class="ic-s"><rect x="1" y="1" width="14" height="14" rx="4" fill="#f9c46a" stroke="#fff"/><circle cx="8" cy="8" r="5" fill="#fff" stroke="#d08a20"/><path d="M5 7l3 3 3-3" stroke="#c60"/></svg>
<svg class="ic-s"><path d="M1 3h8v6H1zM6 7h8v6H6z" fill="#3553b0" stroke="#dde"/><path d="M3 14h5" stroke="#dde"/></svg>
<svg class="ic-s"><circle cx="8" cy="8" r="7" fill="#e89a28" stroke="#333"/><path d="M8 1a7 7 0 0 0 0 14q-4-4 0-7t0-7z" fill="#223" stroke="none"/></svg>
<svg class="ic-s"><path d="M3 2h10v7q-1 4-5 6-4-2-5-6z" fill="#f4f4f8" stroke="#889"/><path d="M6 4l2 6 2-6" stroke="#c22" stroke-width="2"/></svg>
<svg class="ic-s"><circle cx="7" cy="7" r="5" fill="#999" stroke="#444"/><circle cx="7" cy="7" r="2" fill="#ddd" stroke="#444"/><path d="M11 14l4-4M9 15l2-2" stroke="#bdf"/></svg>
<span class="en ms-2">8:57</span>
</div>
<span class="stamp">RCLHOME.COM</span>
</footer>
</div>
</body>
</html>
